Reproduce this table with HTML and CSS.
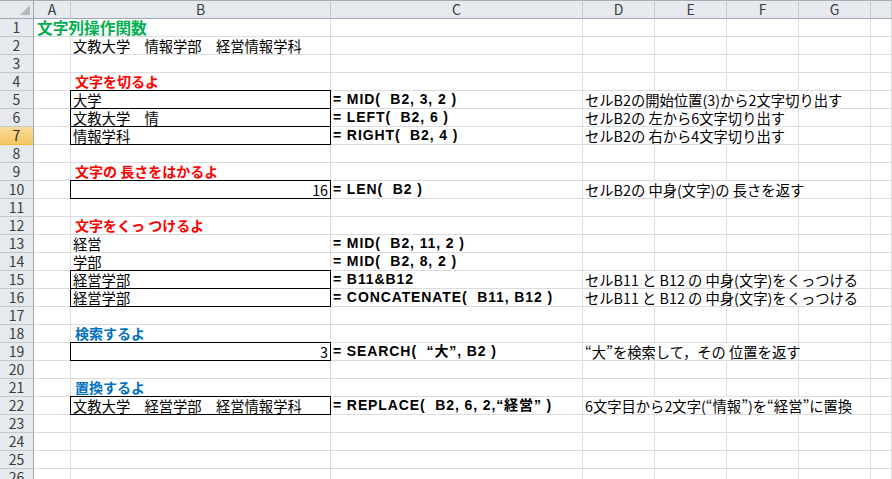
FILE: index.html
```html
<!DOCTYPE html>
<html lang="ja">
<head>
<meta charset="utf-8">
<title>文字列操作関数</title>
<link rel="stylesheet" href="styles.css">
</head>
<body>
<div class="sheet">
  <div class="row head">
    <div class="corner"><span class="tri"></span></div>
    <div class="ch">A</div><div class="ch">B</div><div class="ch">C</div><div class="ch">D</div><div class="ch">E</div><div class="ch">F</div><div class="ch">G</div><div class="ch"></div>
  </div>

  <div class="row"><div class="rh">1</div><div class="c s2 title green">文字列操作関数</div><div class="c"></div><div class="c"></div><div class="c"></div><div class="c"></div><div class="c"></div><div class="c"></div></div>
  <div class="row"><div class="rh">2</div><div class="c"></div><div class="c t">文教大学　情報学部　経営情報学科</div><div class="c"></div><div class="c"></div><div class="c"></div><div class="c"></div><div class="c"></div><div class="c"></div></div>
  <div class="row"><div class="rh">3</div><div class="c"></div><div class="c"></div><div class="c"></div><div class="c"></div><div class="c"></div><div class="c"></div><div class="c"></div><div class="c"></div></div>
  <div class="row"><div class="rh">4</div><div class="c"></div><div class="c hd red">文字を切るよ</div><div class="c"></div><div class="c"></div><div class="c"></div><div class="c"></div><div class="c"></div><div class="c"></div></div>
  <div class="row"><div class="rh">5</div><div class="c"></div><div class="c t box">大学</div><div class="c f">= MID(&nbsp; B2, 3, 2 )</div><div class="c s4 t">セルB2の開始位置(3)から2文字切り出す</div><div class="c"></div></div>
  <div class="row"><div class="rh">6</div><div class="c"></div><div class="c t box">文教大学　情</div><div class="c f">= LEFT(&nbsp; B2, 6 )</div><div class="c s3 t">セルB2の 左から6文字切り出す</div><div class="c"></div><div class="c"></div></div>
  <div class="row"><div class="rh sel">7</div><div class="c"></div><div class="c t box">情報学科</div><div class="c f">= RIGHT(&nbsp; B2, 4 )</div><div class="c s3 t">セルB2の 右から4文字切り出す</div><div class="c"></div><div class="c"></div></div>
  <div class="row"><div class="rh">8</div><div class="c"></div><div class="c"></div><div class="c"></div><div class="c"></div><div class="c"></div><div class="c"></div><div class="c"></div><div class="c"></div></div>
  <div class="row"><div class="rh">9</div><div class="c"></div><div class="c hd red">文字の 長さをはかるよ</div><div class="c"></div><div class="c"></div><div class="c"></div><div class="c"></div><div class="c"></div><div class="c"></div></div>
  <div class="row"><div class="rh">10</div><div class="c"></div><div class="c t num box">16</div><div class="c f">= LEN(&nbsp; B2 )</div><div class="c s3 t">セルB2の 中身(文字)の 長さを返す</div><div class="c"></div><div class="c"></div></div>
  <div class="row"><div class="rh">11</div><div class="c"></div><div class="c"></div><div class="c"></div><div class="c"></div><div class="c"></div><div class="c"></div><div class="c"></div><div class="c"></div></div>
  <div class="row"><div class="rh">12</div><div class="c"></div><div class="c hd red">文字をくっ つけるよ</div><div class="c"></div><div class="c"></div><div class="c"></div><div class="c"></div><div class="c"></div><div class="c"></div></div>
  <div class="row"><div class="rh">13</div><div class="c"></div><div class="c t">経営</div><div class="c f">= MID(&nbsp; B2, 11, 2 )</div><div class="c"></div><div class="c"></div><div class="c"></div><div class="c"></div><div class="c"></div></div>
  <div class="row"><div class="rh">14</div><div class="c"></div><div class="c t">学部</div><div class="c f">= MID(&nbsp; B2, 8, 2 )</div><div class="c"></div><div class="c"></div><div class="c"></div><div class="c"></div><div class="c"></div></div>
  <div class="row"><div class="rh">15</div><div class="c"></div><div class="c t box">経営学部</div><div class="c f">= B11&amp;B12</div><div class="c s4 t">セルB11 と B12 の 中身(文字)をくっつける</div><div class="c"></div></div>
  <div class="row"><div class="rh">16</div><div class="c"></div><div class="c t box">経営学部</div><div class="c f">= CONCATENATE(&nbsp; B11, B12 )</div><div class="c s4 t">セルB11 と B12 の 中身(文字)をくっつける</div><div class="c"></div></div>
  <div class="row"><div class="rh">17</div><div class="c"></div><div class="c"></div><div class="c"></div><div class="c"></div><div class="c"></div><div class="c"></div><div class="c"></div><div class="c"></div></div>
  <div class="row"><div class="rh">18</div><div class="c"></div><div class="c hd blue">検索するよ</div><div class="c"></div><div class="c"></div><div class="c"></div><div class="c"></div><div class="c"></div><div class="c"></div></div>
  <div class="row"><div class="rh">19</div><div class="c"></div><div class="c t num box">3</div><div class="c f">= SEARCH(&nbsp; “大”, B2 )</div><div class="c s3 t">“大”を検索して，その 位置を返す</div><div class="c"></div><div class="c"></div></div>
  <div class="row"><div class="rh">20</div><div class="c"></div><div class="c"></div><div class="c"></div><div class="c"></div><div class="c"></div><div class="c"></div><div class="c"></div><div class="c"></div></div>
  <div class="row"><div class="rh">21</div><div class="c"></div><div class="c hd blue">置換するよ</div><div class="c"></div><div class="c"></div><div class="c"></div><div class="c"></div><div class="c"></div><div class="c"></div></div>
  <div class="row"><div class="rh">22</div><div class="c"></div><div class="c t box">文教大学　経営学部　経営情報学科</div><div class="c f">= REPLACE(&nbsp; B2, 6, 2,“経営” )</div><div class="c s4 t">6文字目から2文字(“情報”)を“経営”に置換</div><div class="c"></div></div>
  <div class="row"><div class="rh">23</div><div class="c"></div><div class="c"></div><div class="c"></div><div class="c"></div><div class="c"></div><div class="c"></div><div class="c"></div><div class="c"></div></div>
  <div class="row"><div class="rh">24</div><div class="c"></div><div class="c"></div><div class="c"></div><div class="c"></div><div class="c"></div><div class="c"></div><div class="c"></div><div class="c"></div></div>
  <div class="row"><div class="rh">25</div><div class="c"></div><div class="c"></div><div class="c"></div><div class="c"></div><div class="c"></div><div class="c"></div><div class="c"></div><div class="c"></div></div>
  <div class="row"><div class="rh">26</div><div class="c"></div><div class="c"></div><div class="c"></div><div class="c"></div><div class="c"></div><div class="c"></div><div class="c"></div><div class="c"></div></div>
</div>
</body>
</html>
```

FILE: styles.css
```css
* { box-sizing: border-box; }
html, body { margin: 0; padding: 0; background: #fff; }
body {
  width: 892px;
  height: 479px;
  overflow: hidden;
  font-family: "Noto Sans CJK JP", "Noto Sans", sans-serif;
  font-size: 14.3px;
  color: #000;
}
.sheet { width: 892px; }
.row {
  display: grid;
  grid-template-columns: 34px 37px 260px 252px 72px 72px 72px 72px 1fr;
  height: 18px;
}
.row.head { height: 19px; }

.corner, .ch {
  background: #e6e9ee;
  border-top: 1px solid #a9adb3;
  border-bottom: 1px solid #a3a8ae;
  border-right: 1px solid #c3c7cc;
  height: 19px;
  font-size: 14px;
  line-height: 17px;
  color: #3c3c3c;
  text-align: center;
}
.corner { position: relative; border-right-color: #a3a8ae; }
.tri {
  position: absolute;
  right: 3px;
  bottom: 3px;
  width: 0;
  height: 0;
  border-left: 10px solid transparent;
  border-bottom: 10px solid #b5bac1;
}
.rh {
  background: #e6e9ee;
  border-right: 1px solid #a3a8ae;
  border-bottom: 1px solid #c3c7cc;
  font-size: 14px;
  line-height: 17px;
  color: #3c3c3c;
  text-align: center;
}
.rh.sel {
  background: linear-gradient(#f9dc9c, #f3c661);
  border-bottom-color: #f0b642;
  color: #2a2a2a;
}

.c {
  position: relative;
  border-right: 1px solid #dadcdd;
  border-bottom: 1px solid #dadcdd;
  line-height: 17px;
  white-space: nowrap;
  overflow: visible;
  padding-left: 2px;
}
.s2 { grid-column: span 2; }
.s3 { grid-column: span 3; }
.s4 { grid-column: span 4; }

.title { padding-left: 3px; font-weight: 700; font-size: 15.7px; }
.green { color: #00b050; }
.red { color: #ff0000; }
.blue { color: #0070c0; }
.hd { font-weight: 700; padding-left: 4px; font-size: 14px; }
.f {
  font-family: "Liberation Sans", "Noto Sans CJK JP", sans-serif;
  font-size: 14px;
  font-weight: 700;
  letter-spacing: 0.9px;
  padding-left: 2px;
}
.num { text-align: right; padding-right: 2px; }

.box::after {
  content: "";
  position: absolute;
  top: -1px;
  left: -1px;
  right: -1px;
  bottom: -1px;
  border: 1px solid #000;
  pointer-events: none;
}
```
